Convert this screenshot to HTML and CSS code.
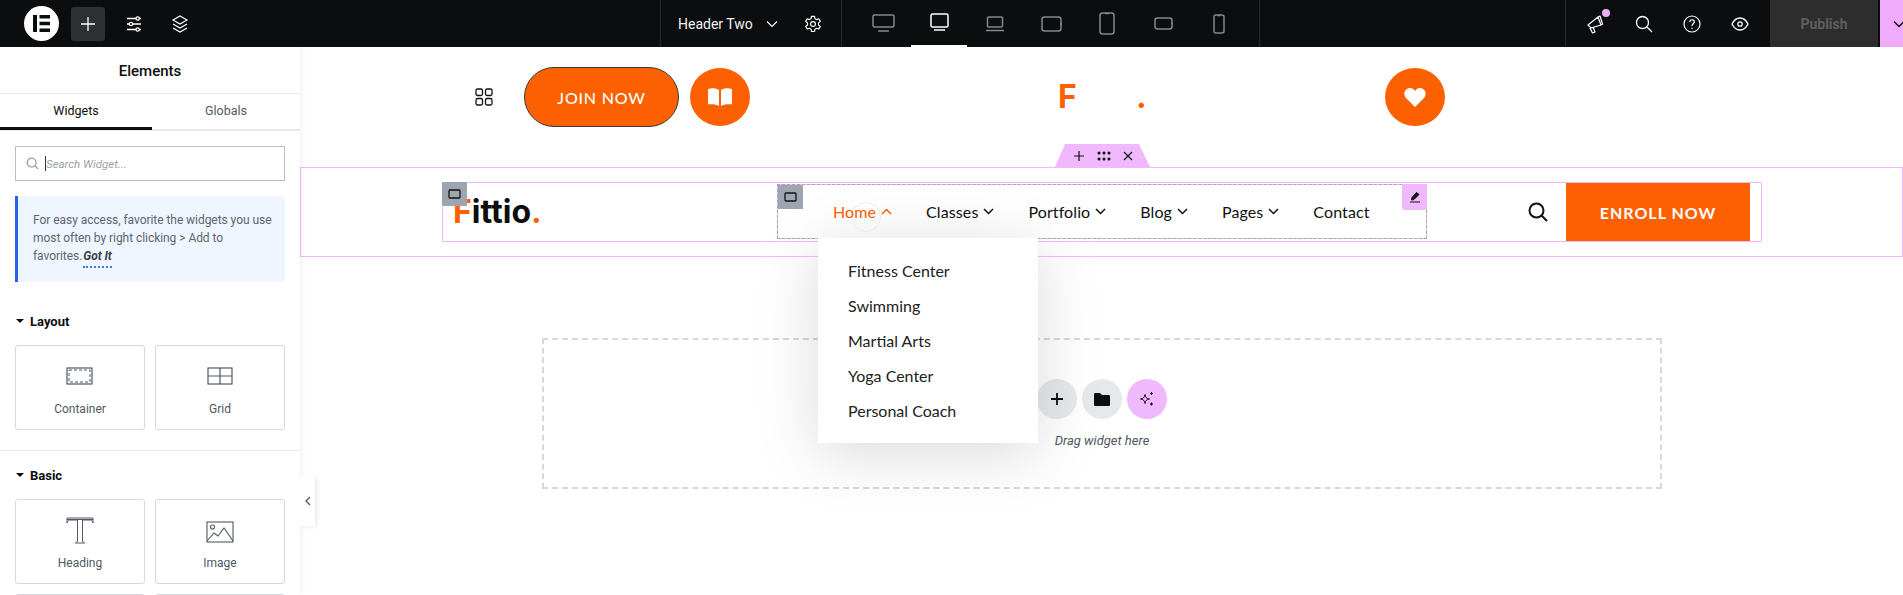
FILE: index.html
```html
<!DOCTYPE html>
<html lang="en">

<head>
    <meta charset="UTF-8">
    <meta name="viewport" content="width=device-width, initial-scale=1.0">
    <title>Elementor - Header Two</title>
    <link rel="stylesheet" href="styles.css">
</head>

<body>
    <!-- Top bar -->
    <header class="topbar">
        <div class="tb-left">
            <span class="tb-logo">
                <svg width="17" height="17" viewBox="0 0 17 17"><path d="M0 0h4v17H0zM6.500 0H17v3.500H6.500zM6.500 6.700H17v3.600H6.500zM6.500 13.500H17V17H6.500z" fill="#0c0d0e"/></svg>
            </span>
            <span class="tb-add">
                <svg width="16" height="16" viewBox="0 0 16 16"><path d="M8 1v14M1 8h14" stroke="#fff" stroke-width="1.300" fill="none"/></svg>
            </span>
            <span class="tb-icon">
                <svg width="20" height="20" viewBox="0 0 20 20" fill="none" stroke="#fff" stroke-width="1.300"><path d="M3 4.500h9M15.500 4.500H17M3 10h2M9 10h8M3 15.500h9M15.500 15.500H17"/><circle cx="13.700" cy="4.500" r="1.700"/><circle cx="7" cy="10" r="1.700"/><circle cx="13.700" cy="15.500" r="1.700"/></svg>
            </span>
            <span class="tb-icon">
                <svg width="20" height="20" viewBox="0 0 20 20" fill="none" stroke="#fff" stroke-width="1.200"><path d="M10 2l7 4-7 4-7-4zM3 10l7 4 7-4M3 14l7 4 7-4"/></svg>
            </span>
        </div>

        <div class="tb-doc">
            <span class="doc-name">Header Two</span>
            <svg class="doc-chev" width="12" height="12" viewBox="0 0 12 12"><path d="M1 3.500l5 5 5-5" stroke="#fff" stroke-width="1.100" fill="none"/></svg>
            <svg class="doc-gear" width="18" height="20" viewBox="0 0 20 20" fill="none" stroke="#fff" stroke-width="1.300"><circle cx="10" cy="10" r="2.700"/><path d="M8.300 1.500h3.400l.5 2.600 1.700 1 2.500-.9 1.700 2.900-2 1.700v2.200l2 1.700-1.700 2.900-2.500-.9-1.700 1-.5 2.600H8.300l-.5-2.600-1.700-1-2.500.9-1.700-2.900 2-1.700V8.800l-2-1.700 1.700-2.900 2.500.9 1.700-1z" stroke-linejoin="round"/></svg>
        </div>

        <div class="tb-devices">
            <span class="device">
                <svg width="23" height="20" viewBox="0 0 23 20"><rect x="1" y="1" width="21" height="12" rx="1.500"/><path d="M6 17h11"/></svg>
            </span>
            <span class="device device-on">
                <svg width="19" height="20" viewBox="0 0 19 20"><rect x="1" y="1" width="17" height="13" rx="1.500"/><path d="M4 17h11"/></svg>
            </span>
            <span class="device">
                <svg width="20" height="16" viewBox="0 0 20 16"><rect x="2.500" y="1" width="15" height="10" rx="1"/><path d="M1 14.500h18"/></svg>
            </span>
            <span class="device">
                <svg width="21" height="16" viewBox="0 0 21 16"><rect x="1" y="1" width="19" height="14" rx="2.500"/><path d="M20 6.500v3"/></svg>
            </span>
            <span class="device">
                <svg width="16" height="23" viewBox="0 0 16 23"><rect x="1" y="1" width="14" height="21" rx="2.500"/><path d="M6 1.500h4"/></svg>
            </span>
            <span class="device">
                <svg width="19" height="13" viewBox="0 0 19 13"><rect x="1" y="1" width="17" height="11" rx="2.500"/><path d="M18 5.500v2"/></svg>
            </span>
            <span class="device">
                <svg width="12" height="20" viewBox="0 0 12 20"><rect x="1" y="1" width="10" height="18" rx="2"/><path d="M4.500 1.500h3"/></svg>
            </span>
        </div>

        <div class="tb-spacer"></div>

        <div class="tb-right">
            <span class="tb-icon tb-news">
                <svg width="20" height="22" viewBox="0 0 20 22" fill="none" stroke="#fff" stroke-width="1.200" stroke-linejoin="round"><path d="M2 12l10-8 3 8-10 3zM4 15l2.500 5 2.500-1-2-5M12 4l3 8 1.500-1-2.500-8z"/></svg>
                <i class="news-dot"></i>
            </span>
            <span class="tb-icon">
                <svg width="18" height="18" viewBox="0 0 18 18" fill="none" stroke="#fff" stroke-width="1.300"><circle cx="7.500" cy="7.500" r="6"/><path d="M12 12l5 5"/></svg>
            </span>
            <span class="tb-icon">
                <svg width="18" height="18" viewBox="0 0 18 18" fill="none" stroke="#fff" stroke-width="1.200"><circle cx="9" cy="9" r="8"/><path d="M6.800 7c0-3 4.500-3 4.500 0 0 1.800-2.300 1.800-2.300 4M9 12.700v1.200"/></svg>
            </span>
            <span class="tb-icon">
                <svg width="18" height="14" viewBox="0 0 18 14" fill="none" stroke="#fff" stroke-width="1.300"><path d="M1 7c4-8 12-8 16 0-4 8-12 8-16 0z"/><circle cx="9" cy="7" r="2.200"/></svg>
            </span>
            <span class="publish">Publish</span>
            <span class="publish-more">
                <svg width="12" height="12" viewBox="0 0 12 12"><path d="M1 3.500l5 5 5-5" stroke="#0c0d0e" stroke-width="1.300" fill="none"/></svg>
            </span>
        </div>
    </header>

    <div class="main">
        <!-- Elements panel -->
        <aside class="panel">
            <div class="panel-scroll">
                <div class="panel-title">Elements</div>
                <div class="panel-tabs">
                    <span class="panel-tab panel-tab-on">Widgets</span>
                    <span class="panel-tab">Globals</span>
                </div>
                <div class="panel-search">
                    <svg width="13" height="13" viewBox="0 0 14 14" fill="none" stroke="#9ca3ad" stroke-width="1.400"><circle cx="6" cy="6" r="4.800"/><path d="M9.500 9.500L13 13"/></svg>
                    <span class="caret-line"></span>
                    <span class="search-ph">Search Widget...</span>
                </div>
                <div class="notice">
                    For easy access, favorite the widgets you use most often by right clicking &gt; Add to favorites.<a class="notice-link" href="#">Got It</a>
                </div>

                <section class="group">
                    <h4 class="group-title"><i class="tri"></i>Layout</h4>
                    <div class="cards">
                        <div class="card">
                            <svg width="28" height="20" viewBox="0 0 28 20" fill="none" stroke="#515962"><rect x="1" y="2" width="25" height="16" stroke-width="1.200"/><rect x="3" y="4" width="21" height="12" stroke-dasharray="3 2"/></svg>
                            <span>Container</span>
                        </div>
                        <div class="card">
                            <svg width="26" height="20" viewBox="0 0 26 20" fill="none" stroke="#515962" stroke-width="1.200"><rect x="1" y="2" width="24" height="16"/><path d="M13 2v16M1 10h24"/></svg>
                            <span>Grid</span>
                        </div>
                    </div>
                </section>

                <section class="group group-next">
                    <h4 class="group-title"><i class="tri"></i>Basic</h4>
                    <div class="cards">
                        <div class="card card-big">
                            <svg width="28" height="28" viewBox="0 0 28 28" fill="none" stroke="#515962" stroke-width="1"><path d="M1 1h26v5c-1-2.500-2-3-4-3h-6.500v21.500l2 1.500h-9l2-1.500V3H5C3 3 2 3.500 1 6zM1 2.500h26"/></svg>
                            <span>Heading</span>
                        </div>
                        <div class="card card-big">
                            <svg width="28" height="28" viewBox="0 -4 28 28" fill="none" stroke="#515962" stroke-width="1.100"><rect x="1" y="1" width="26" height="20"/><circle cx="6.500" cy="6" r="2"/><path d="M1 20l7-8 4 3 6-8 9 13"/></svg>
                            <span>Image</span>
                        </div>
                    </div>
                    <div class="cards cards-more">
                        <div class="card"></div>
                        <div class="card"></div>
                    </div>
                </section>
            </div>
            <span class="panel-toggle">
                <svg width="6" height="10" viewBox="0 0 6 10"><path d="M5 1L1 5l4 4" stroke="#515962" stroke-width="1.300" fill="none"/></svg>
            </span>
        </aside>

        <!-- Canvas -->
        <main class="canvas">
            <div class="site-top">
                <svg class="apps" width="18" height="18" viewBox="0 0 18 18" fill="none" stroke="#111" stroke-width="1.300"><rect x="1" y="1" width="6.500" height="6.500" rx="1.500"/><rect x="10.500" y="1" width="6.500" height="6.500" rx="1.500"/><rect x="1" y="10.500" width="6.500" height="6.500" rx="1.500"/><rect x="10.500" y="10.500" width="6.500" height="6.500" rx="1.500"/></svg>
                <span class="join-btn">JOIN NOW</span>
                <span class="round-btn">
                    <svg width="24" height="18" viewBox="0 0 24 18" fill="#fff"><path d="M0 1c4-1 8-1 11 1v16C8 16 4 16 0 16.500zM24 1c-4-1-8-1-11 1v16c3-2 7-2 11-1.500z"/></svg>
                </span>
                <span class="logo logo-top">F<span class="logo-mid">ittio</span>.</span>
                <span class="round-btn heart-btn">
                    <svg width="22" height="19" viewBox="0 0 22 19" fill="#fff"><path d="M11 19L2 10C-2 5 2 0 6 0c2 0 4 1 5 3 1-2 3-3 5-3 4 0 8 5 4 10z"/></svg>
                </span>
                <span class="sec-handle">
                    <svg width="12" height="12" viewBox="0 0 12 12"><path d="M6 1v10M1 6h10" stroke="#111" stroke-width="1.200"/></svg>
                    <svg width="14" height="10" viewBox="0 0 14 10" fill="#111"><circle cx="2" cy="2" r="1.500"/><circle cx="7" cy="2" r="1.500"/><circle cx="12" cy="2" r="1.500"/><circle cx="2" cy="8" r="1.500"/><circle cx="7" cy="8" r="1.500"/><circle cx="12" cy="8" r="1.500"/></svg>
                    <svg width="10" height="10" viewBox="0 0 10 10"><path d="M1 1l8 8M9 1L1 9" stroke="#111" stroke-width="1.200"/></svg>
                </span>
            </div>

            <section class="site-nav-sec">
                <div class="site-nav-box">
                    <span class="tag tag-box">
                        <svg width="13" height="10" viewBox="0 0 13 10"><rect x="1" y="1" width="11" height="8" rx="1" fill="none" stroke="#111" stroke-width="1.300"/></svg>
                    </span>
                    <span class="logo logo-nav">F<span class="logo-dark">ittio</span>.</span>

                    <nav class="menu-box">
                        <span class="tag tag-menu">
                            <svg width="13" height="10" viewBox="0 0 13 10"><rect x="1" y="1" width="11" height="8" rx="1" fill="none" stroke="#111" stroke-width="1.300"/></svg>
                        </span>
                        <span class="tag-edit">
                            <svg width="12" height="12" viewBox="0 0 12 12"><path d="M7.500 1.500L10 3.500 5 8.500 2.500 9 3 6.500zM1 11h10" fill="#111" stroke="#111" stroke-width="1"/></svg>
                        </span>
                        <a class="menu-item menu-on" href="#">Home
                            <svg width="11" height="7" viewBox="0 0 11 7"><path d="M1 6l4.500-4.500L10 6" stroke="#fd6001" stroke-width="1.500" fill="none"/></svg>
                            <i class="ripple"></i>
                        </a>
                        <a class="menu-item" href="#">Classes
                            <svg width="11" height="7" viewBox="0 0 11 7"><path d="M1 1l4.500 4.500L10 1" stroke="#111" stroke-width="1.500" fill="none"/></svg>
                        </a>
                        <a class="menu-item" href="#">Portfolio
                            <svg width="11" height="7" viewBox="0 0 11 7"><path d="M1 1l4.500 4.500L10 1" stroke="#111" stroke-width="1.500" fill="none"/></svg>
                        </a>
                        <a class="menu-item" href="#">Blog
                            <svg width="11" height="7" viewBox="0 0 11 7"><path d="M1 1l4.500 4.500L10 1" stroke="#111" stroke-width="1.500" fill="none"/></svg>
                        </a>
                        <a class="menu-item" href="#">Pages
                            <svg width="11" height="7" viewBox="0 0 11 7"><path d="M1 1l4.500 4.500L10 1" stroke="#111" stroke-width="1.500" fill="none"/></svg>
                        </a>
                        <a class="menu-item" href="#">Contact</a>

                        <ul class="dropdown">
                            <li>Fitness Center</li>
                            <li>Swimming</li>
                            <li>Martial Arts</li>
                            <li>Yoga Center</li>
                            <li>Personal Coach</li>
                        </ul>
                    </nav>

                    <svg class="nav-search" width="20" height="20" viewBox="0 0 20 20" fill="none" stroke="#111" stroke-width="2"><circle cx="8.500" cy="8.500" r="7"/><path d="M13.500 13.500L19 19"/></svg>
                    <span class="enroll-btn">ENROLL NOW</span>
                </div>
            </section>

            <section class="dropzone">
                <div class="dz-btns">
                    <span class="dz-btn">
                        <svg width="14" height="14" viewBox="0 0 14 14"><path d="M7 1v12M1 7h12" stroke="#0c0d0e" stroke-width="1.800"/></svg>
                    </span>
                    <span class="dz-btn">
                        <svg width="16" height="13" viewBox="0 0 16 13"><path d="M0 1.500C0 .500.500 0 1.500 0H6l2 2h6.500c1 0 1.500.500 1.500 1.500v8c0 1-.500 1.500-1.500 1.500h-13C.500 13 0 12.500 0 11.500z" fill="#0c0d0e"/></svg>
                    </span>
                    <span class="dz-btn dz-ai">
                        <svg width="16" height="16" viewBox="0 0 16 16" fill="none" stroke="#0c0d0e" stroke-width="1"><path d="M6 3.500c.5 3 1.500 4 4.500 4.500-3 .5-4 1.500-4.500 4.500-.5-3-1.500-4-4.500-4.500 3-.5 4-1.500 4.500-4.500z"/><path d="M12.500 1v3M11 2.500h3M12.500 11.500v3M11 13h3" stroke-width="1.200"/></svg>
                    </span>
                </div>
                <p class="dz-text">Drag widget here</p>
            </section>
        </main>
    </div>
</body>

</html>
```

FILE: styles.css
```css
/* Page */
* {
    box-sizing: border-box;
}

html {
    overflow: hidden;
}

body {
    margin: 0;
    height: 595px;
    overflow: hidden;
    background-color: #fff;
    font-family: Roboto, "Liberation Sans", sans-serif;
    color: #0c0d0e;
}

a {
    text-decoration: none;
}

/* Top bar */
.topbar {
    display: flex;
    height: 47px;
    background-color: #0c0d0e;
    color: #fff;
}

.tb-left {
    display: flex;
    flex: none;
    align-items: center;
    width: 661px;
    padding-left: 24px;
    border-right: 1px solid #2b2c2e;
}

.tb-logo {
    display: flex;
    align-items: center;
    justify-content: center;
    width: 35px;
    height: 35px;
    border-radius: 50%;
    background-color: #fff;
}

.tb-add {
    display: flex;
    align-items: center;
    justify-content: center;
    width: 34px;
    height: 34px;
    margin: 0 6px 0 12px;
    border-radius: 3px;
    background-color: #2f3033;
}

.tb-icon {
    position: relative;
    display: flex;
    flex: none;
    align-items: center;
    justify-content: center;
    width: 48px;
    height: 47px;
}

.tb-left .tb-icon {
    width: 46px;
}

.tb-doc {
    display: flex;
    flex: none;
    align-items: center;
    width: 181px;
    padding-left: 17px;
    border-right: 1px solid #2b2c2e;
}

.doc-name {
    font-size: 14px;
    width: 88px;
    color: #f1f2f3;
}

.doc-chev {
    margin-right: 26px;
}

.tb-devices {
    display: flex;
    flex: none;
    width: 418px;
    padding-left: 13px;
    border-right: 1px solid #2b2c2e;
}

.device {
    display: flex;
    align-items: center;
    justify-content: center;
    width: 56px;
    height: 47px;
}

.device svg {
    fill: none;
    stroke: #85878b;
    stroke-width: 1.500;
}

.device-on {
    border-bottom: 2px solid #fff;
}

.device-on svg {
    stroke: #fff;
}

.tb-spacer {
    flex: none;
    width: 305px;
}

.tb-right {
    display: flex;
    align-items: center;
    flex: 1;
    min-width: 0;
    overflow: hidden;
    padding-left: 6px;
    border-left: 1px solid #2b2c2e;
}

.news-dot {
    position: absolute;
    top: 9px;
    left: 30px;
    width: 8px;
    height: 8px;
    border-radius: 50%;
    background-color: #f0abfc;
}

.publish {
    display: flex;
    flex: none;
    align-items: center;
    justify-content: center;
    width: 108px;
    height: 47px;
    margin-left: 6px;
    background-color: #2d2d2e;
    color: #5e5f61;
    font-size: 14px;
    font-weight: 700;
}

.publish-more {
    display: flex;
    flex: none;
    align-items: center;
    width: 23px;
    height: 47px;
    margin-left: 2px;
    padding-left: 13px;
    background-color: #f0abfc;
}

.publish-more svg {
    flex: none;
}

/* Layout under the bar */
.main {
    display: flex;
    height: 548px;
    overflow: hidden;
}

/* Elements panel */
.panel {
    position: relative;
    flex: none;
    width: 300px;
    height: 548px;
    background-color: #fff;
    box-shadow: 1px 0 6px rgba(0, 0, 0, 0.07);
    z-index: 5;
}

.panel-scroll {
    height: 548px;
    overflow: hidden;
}

.panel-title {
    height: 47px;
    border-bottom: 1px solid #e6e8ea;
    font-size: 15px;
    font-weight: 500;
    line-height: 49px;
    text-align: center;
}

.panel-tabs {
    display: flex;
    height: 37px;
    border-bottom: 2px solid #e6e8ea;
}

.panel-tab {
    flex: 1;
    height: 36px;
    font-size: 12.500px;
    line-height: 33px;
    text-align: center;
    color: #515962;
}

.panel-tab-on {
    flex: none;
    width: 152px;
    color: #0c0d0e;
    border-bottom: 3px solid #0c0d0e;
}

.panel-search {
    display: flex;
    align-items: center;
    height: 35px;
    margin: 15px;
    padding-left: 10px;
    border: 1px solid #b9bec5;
}

.caret-line {
    width: 1px;
    height: 15px;
    margin-left: 6px;
    background-color: #333;
}

.search-ph {
    font-size: 11.500px;
    font-style: italic;
    color: #9a9fa6;
}

.notice {
    height: 86px;
    margin: 0 15px;
    padding: 15px 0 0 15px;
    border-left: 3px solid #2563eb;
    border-radius: 0 3px 3px 0;
    background-color: #f0f6ff;
    font-size: 12px;
    letter-spacing: -0.05px;
    line-height: 18px;
    color: #5d656e;
}

.notice-link {
    font-weight: 700;
    font-style: italic;
    padding-bottom: 3px;
    margin-left: 1px;
    color: #3a4047;
    border-bottom: 2px dotted #3b76f6;
}

.group {
    padding: 31px 15px 20px;
    border-bottom: 1px solid #e6e8ea;
}

.group-next {
    padding-top: 16px;
    border-bottom: 0;
}

.group-title {
    display: flex;
    align-items: center;
    height: 16px;
    margin: 0 0 16px;
    font-size: 13px;
    font-weight: 700;
}

.tri {
    width: 0;
    height: 0;
    margin: 0 6px 0 1px;
    border-top: 4px solid #0c0d0e;
    border-left: 4px solid transparent;
    border-right: 4px solid transparent;
}

.cards {
    display: grid;
    grid-template-columns: 130px 130px;
    gap: 10px;
}

.cards-more {
    margin-top: 10px;
}

.card {
    display: flex;
    flex-direction: column;
    align-items: center;
    height: 85px;
    padding-top: 20px;
    border: 1px solid #d5d8dc;
    border-radius: 3px;
    font-size: 12px;
    color: #515962;
}

.card span {
    margin-top: 16px;
}

.card-big {
    padding-top: 17px;
}

.card-big span {
    margin-top: 11px;
}

.panel-toggle {
    position: absolute;
    top: 429px;
    left: 300px;
    display: flex;
    align-items: center;
    justify-content: center;
    width: 15px;
    height: 50px;
    background-color: #fff;
    box-shadow: 2px 1px 4px rgba(0, 0, 0, 0.08);
}

/* Canvas */
.canvas {
    position: relative;
    flex: 1;
    overflow: hidden;
}

.site-top {
    position: relative;
    display: flex;
    align-items: center;
    height: 120px;
    padding: 0 0 20px 175px;
}

.apps {
    margin-right: 31px;
}

.join-btn {
    display: flex;
    align-items: center;
    justify-content: center;
    width: 155px;
    height: 60px;
    border: 1px solid #3a3a3a;
    border-radius: 30px;
    background-color: #fd6001;
    color: #fff;
    font-family: Lato, sans-serif;
    font-size: 16px;
    font-weight: 500;
    letter-spacing: 0.8px;
}

.round-btn {
    display: flex;
    align-items: center;
    justify-content: center;
    width: 60px;
    height: 58px;
    margin-left: 11px;
    border-radius: 50%;
    background-color: #fd6001;
}

.logo {
    font-family: Inter, sans-serif;
    font-size: 32px;
    font-weight: 700;
    line-height: 38px;
    color: #fd6001;
}

.logo-top {
    width: 87px;
    margin-left: 308px;
}

.logo-mid {
    color: #fff;
}

.logo-dark {
    color: #0c0d0e;
}

.heart-btn {
    margin-left: 240px;
}

.sec-handle {
    position: absolute;
    left: 755px;
    bottom: 0;
    display: flex;
    align-items: center;
    justify-content: center;
    gap: 12px;
    width: 95px;
    height: 23px;
    background-color: #f0b8fd;
    clip-path: polygon(10px 0, 84px 0, 95px 23px, 0 23px);
}

.site-nav-sec {
    height: 90px;
    padding: 14px 140px 0 141px;
    border: 1px solid #f3bafd;
}

.site-nav-box {
    position: relative;
    display: flex;
    align-items: center;
    height: 60px;
    border: 1px solid #f3bafd;
}

.tag {
    position: absolute;
    display: flex;
    align-items: center;
    justify-content: center;
    width: 25px;
    height: 24px;
    background-color: #9da5ae;
    z-index: 2;
}

.tag-box {
    top: -1px;
    left: -1px;
}

.tag-menu {
    top: 0;
    left: 0;
}

.logo-nav {
    flex: none;
    width: 324px;
    margin-left: 10px;
}

.menu-box {
    position: relative;
    display: flex;
    flex: none;
    align-items: center;
    width: 650px;
    height: 55px;
    margin-top: -1px;
    padding-left: 55px;
    border: 1px dashed #a5a7ab;
    background: linear-gradient(#fff, #fff) padding-box, linear-gradient(#f3bafd, #f3bafd) border-box;
}

.tag-edit {
    position: absolute;
    top: -1px;
    right: -1px;
    display: flex;
    align-items: center;
    justify-content: center;
    width: 25px;
    height: 26px;
    border-radius: 0 0 0 3px;
    background-color: #f0b8fd;
}

.menu-item {
    position: relative;
    display: flex;
    flex: none;
    align-items: center;
    gap: 5px;
    margin-right: 34px;
    font-family: Lato, sans-serif;
    font-size: 16px;
    font-weight: 400;
    letter-spacing: 0.1px;
    color: #111;
    white-space: nowrap;
}

.menu-on {
    color: #fd6001;
}

.ripple {
    position: absolute;
    top: 0;
    left: 18px;
    width: 30px;
    height: 30px;
    border: 1px solid rgba(0, 0, 0, 0.05);
    border-radius: 50%;
}

.dropdown {
    position: absolute;
    top: 53px;
    left: 40px;
    width: 220px;
    height: 205px;
    margin: 0;
    padding: 15px 0 0 30px;
    background-color: #fff;
    box-shadow: 0 10px 60px rgba(0, 0, 0, 0.15);
    list-style: none;
    font-family: Lato, sans-serif;
    font-size: 16px;
    font-weight: 400;
    color: #222;
    z-index: 3;
}

.dropdown li {
    height: 35px;
    line-height: 35px;
}

.nav-search {
    flex: none;
    margin-left: 101px;
}

.enroll-btn {
    display: flex;
    flex: none;
    align-items: center;
    justify-content: center;
    width: 184px;
    height: 58px;
    margin-left: 18px;
    background-color: #fd6001;
    color: #fff;
    font-family: Lato, sans-serif;
    font-size: 16px;
    font-weight: 700;
    letter-spacing: 1px;
}

/* Empty drop zone */
.dropzone {
    display: flex;
    flex-direction: column;
    align-items: center;
    width: 1120px;
    height: 151px;
    margin: 81px 0 0 242px;
    padding-top: 39px;
    border: 2px dashed #d5d8dc;
}

.dz-btns {
    display: flex;
    gap: 5px;
}

.dz-btn {
    display: flex;
    align-items: center;
    justify-content: center;
    width: 40px;
    height: 40px;
    border-radius: 50%;
    background-color: #e6e8ea;
}

.dz-ai {
    background-color: #f0b8fd;
}

.dz-text {
    margin: 14px 0 0;
    font-size: 13px;
    font-style: italic;
    color: #515962;
}
```
